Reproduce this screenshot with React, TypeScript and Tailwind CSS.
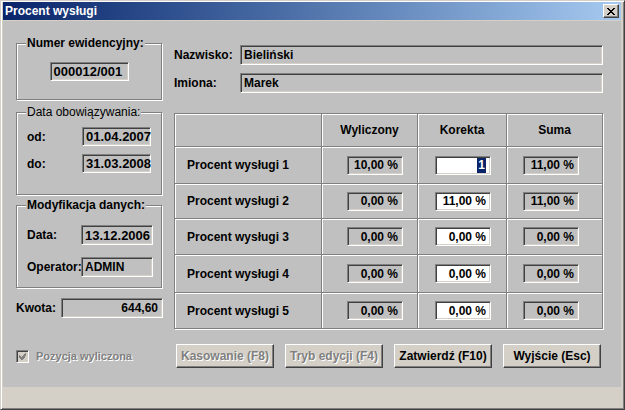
import type { ReactNode } from 'react'

const SUNKEN =
  'border border-t-[#808080] border-l-[#808080] border-r-white border-b-white shadow-[inset_1px_1px_0_#404040,inset_-1px_-1px_0_#d4d0c8]'
const RAISED =
  'border border-t-white border-l-white border-r-[#404040] border-b-[#404040] shadow-[inset_-1px_-1px_0_#808080,inset_1px_1px_0_#d4d0c8]'
const DISABLED = 'text-[#808080] [text-shadow:1px_1px_0_#ffffff]'

const ROWS = [
  { label: 'Procent wysługi 1', calc: '10,00 %', fix: '1', sum: '11,00 %', active: true },
  { label: 'Procent wysługi 2', calc: '0,00 %', fix: '11,00 %', sum: '11,00 %' },
  { label: 'Procent wysługi 3', calc: '0,00 %', fix: '0,00 %', sum: '0,00 %' },
  { label: 'Procent wysługi 4', calc: '0,00 %', fix: '0,00 %', sum: '0,00 %' },
  { label: 'Procent wysługi 5', calc: '0,00 %', fix: '0,00 %', sum: '0,00 %' },
]

function Field({
  children,
  className = '',
  right = false,
  white = false,
}: {
  children?: ReactNode
  className?: string
  right?: boolean
  white?: boolean
}) {
  return (
    <div
      className={`${SUNKEN} ${white ? 'bg-white' : 'bg-[#c0c0c0]'} flex items-center font-bold text-[12px] leading-none whitespace-nowrap ${
        right ? 'justify-end pr-[4px]' : 'pl-[3px]'
      } ${className}`}
    >
      {children}
    </div>
  )
}

function GroupBox({
  title,
  bold = true,
  className = '',
  children,
}: {
  title: string
  bold?: boolean
  className?: string
  children: ReactNode
}) {
  return (
    <fieldset
      className={`w-[146px] border border-[#808080] shadow-[inset_1px_1px_0_#ffffff,1px_1px_0_#ffffff] ${className}`}
    >
      <legend
        className={`ml-[9px] px-[1px] bg-[#c0c0c0] text-[12px] leading-[14px] ${bold ? 'font-bold' : ''}`}
      >
        {title}
      </legend>
      {children}
    </fieldset>
  )
}

function Cell({ children, className = '' }: { children?: ReactNode; className?: string }) {
  return (
    <div
      className={`border-r border-b border-[#808080] shadow-[inset_1px_1px_0_#ffffff] flex items-center ${className}`}
    >
      {children}
    </div>
  )
}

function Button({ label, disabled = false }: { label: string; disabled?: boolean }) {
  return (
    <div
      className={`${RAISED} bg-[#d4d0c8] w-[98px] h-[24px] flex items-center justify-center font-bold text-[12px] ${
        disabled ? DISABLED : ''
      }`}
    >
      {label}
    </div>
  )
}

export default function App() {
  return (
    <div className="w-[625px] h-[410px] bg-[#d4d0c8] border border-t-[#d4d0c8] border-l-[#d4d0c8] border-r-[#404040] border-b-[#404040] shadow-[inset_1px_1px_0_#ffffff,inset_-1px_-1px_0_#808080] pt-[1px] pl-[2px] pr-[3px] pb-[2px] font-['Liberation_Sans',Arial,sans-serif] text-black">
      {/* title bar */}
      <div className="h-[18px] bg-linear-to-r from-[#0a246a] to-[#a6caf0] flex items-center justify-between pl-[2px] pr-[2px]">
        <span className="text-white font-bold text-[12px]">Procent wysługi</span>
        <div className={`${RAISED} bg-[#d4d0c8] w-[16px] h-[14px] flex items-center justify-center`}>
          <svg width="8" height="7" viewBox="0 0 8 7" shapeRendering="crispEdges">
            <path
              d="M0 0h2v1H0zM6 0h2v1H6zM1 1h2v1H1zM5 1h2v1H5zM2 2h4v1H2zM3 3h2v1H3zM2 4h4v1H2zM1 5h2v1H1zM5 5h2v1H5zM0 6h2v1H0zM6 6h2v1H6z"
              fill="#000"
            />
          </svg>
        </div>
      </div>
      <div className="h-px" />

      {/* body */}
      <div className="h-[366px] bg-[#c0c0c0] flex flex-col">
        <div className="h-[323px] flex pl-[13px]">
          {/* left column */}
          <div className="w-[147px] pt-[15px] flex flex-col">
            <GroupBox title="Numer ewidencyjny:" className="h-[64px]">
              <div className="flex justify-center pt-[12px]">
                <Field className="w-[79px] h-[19px] text-[13px]">000012/001</Field>
              </div>
            </GroupBox>

            <GroupBox title="Data obowiązywania:" bold={false} className="h-[90px] mt-[5px]">
              <div className="flex flex-col gap-[8px] pt-[8px] pl-[10px]">
                <div className="flex items-center">
                  <span className="w-[55px] font-bold text-[12px]">od:</span>
                  <Field className="w-[69px] h-[19px] text-[13px]">01.04.2007</Field>
                </div>
                <div className="flex items-center">
                  <span className="w-[55px] font-bold text-[12px]">do:</span>
                  <Field className="w-[69px] h-[19px] text-[13px]">31.03.2008</Field>
                </div>
              </div>
            </GroupBox>

            <GroupBox title="Modyfikacja danych:" className="h-[90px] mt-[3px]">
              <div className="flex flex-col gap-[12px] pt-[13px] pl-[10px]">
                <div className="flex items-center">
                  <span className="w-[54px] font-bold text-[12px]">Data:</span>
                  <Field className="w-[72px] h-[20px] text-[13px]">13.12.2006</Field>
                </div>
                <div className="flex items-center">
                  <span className="w-[54px] font-bold text-[12px]">Operator:</span>
                  <Field className="w-[72px] h-[20px]">ADMIN</Field>
                </div>
              </div>
            </GroupBox>

            <div className="flex items-center mt-[10px]">
              <span className="w-[45px] font-bold text-[12px]">Kwota:</span>
              <Field right className="w-[102px] h-[20px]">
                644,60
              </Field>
            </div>
          </div>

          {/* right column */}
          <div className="ml-[11px] pt-[24px] flex flex-col">
            <div className="flex items-center">
              <span className="w-[66px] font-bold text-[12px]">Nazwisko:</span>
              <Field className="w-[363px] h-[20px]">Bieliński</Field>
            </div>
            <div className="flex items-center mt-[8px]">
              <span className="w-[66px] font-bold text-[12px]">Imiona:</span>
              <Field className="w-[363px] h-[20px]">Marek</Field>
            </div>

            <div className="mt-[20px] w-fit grid grid-cols-[147px_96px_89px_96px] grid-rows-[33px_37px_35px_36px_38px_36px] border-t border-l border-[#808080] shadow-[1px_1px_0_#ffffff] font-bold text-[12px]">
              <Cell />
              <Cell className="justify-center">Wyliczony</Cell>
              <Cell className="justify-center">Korekta</Cell>
              <Cell className="justify-center">Suma</Cell>
              {ROWS.map((r) => (
                <div key={r.label} className="contents">
                  <Cell className="pl-[12px]">{r.label}</Cell>
                  <Cell className="pl-[25px]">
                    <Field right className="w-[56px] h-[19px]">
                      {r.calc}
                    </Field>
                  </Cell>
                  <Cell className="pl-[17px]">
                    <Field right white className="w-[56px] h-[19px]">
                      {r.active ? (
                        <span className="bg-[#0a246a] text-white px-[1px] leading-[15px]">{r.fix}</span>
                      ) : (
                        r.fix
                      )}
                    </Field>
                  </Cell>
                  <Cell className="pl-[16px]">
                    <Field right className="w-[56px] h-[19px]">
                      {r.sum}
                    </Field>
                  </Cell>
                </div>
              ))}
            </div>
          </div>
        </div>

        {/* bottom row */}
        <div className="flex items-center pl-[13px]">
          <div className="w-[160px] flex items-center gap-[7px]">
            <div className={`${SUNKEN} bg-[#d4d0c8] w-[13px] h-[13px] flex items-center justify-center`}>
              <svg width="7" height="7" viewBox="0 0 7 7" shapeRendering="crispEdges">
                <path d="M6 0h1v3H6zM5 1h1v4H5zM4 2h1v4H4zM3 3h1v4H3zM2 4h1v3H2zM1 3h1v3H1zM0 2h1v3H0z" fill="#808080" />
              </svg>
            </div>
            <span className={`text-[11px] font-bold ${DISABLED}`}>Pozycja wyliczona</span>
          </div>
          <div className="flex gap-[11px]">
            <Button label="Kasowanie (F8)" disabled />
            <Button label="Tryb edycji (F4)" disabled />
            <Button label="Zatwierdź (F10)" />
            <Button label="Wyjście (Esc)" />
          </div>
        </div>
      </div>
    </div>
  )
}
